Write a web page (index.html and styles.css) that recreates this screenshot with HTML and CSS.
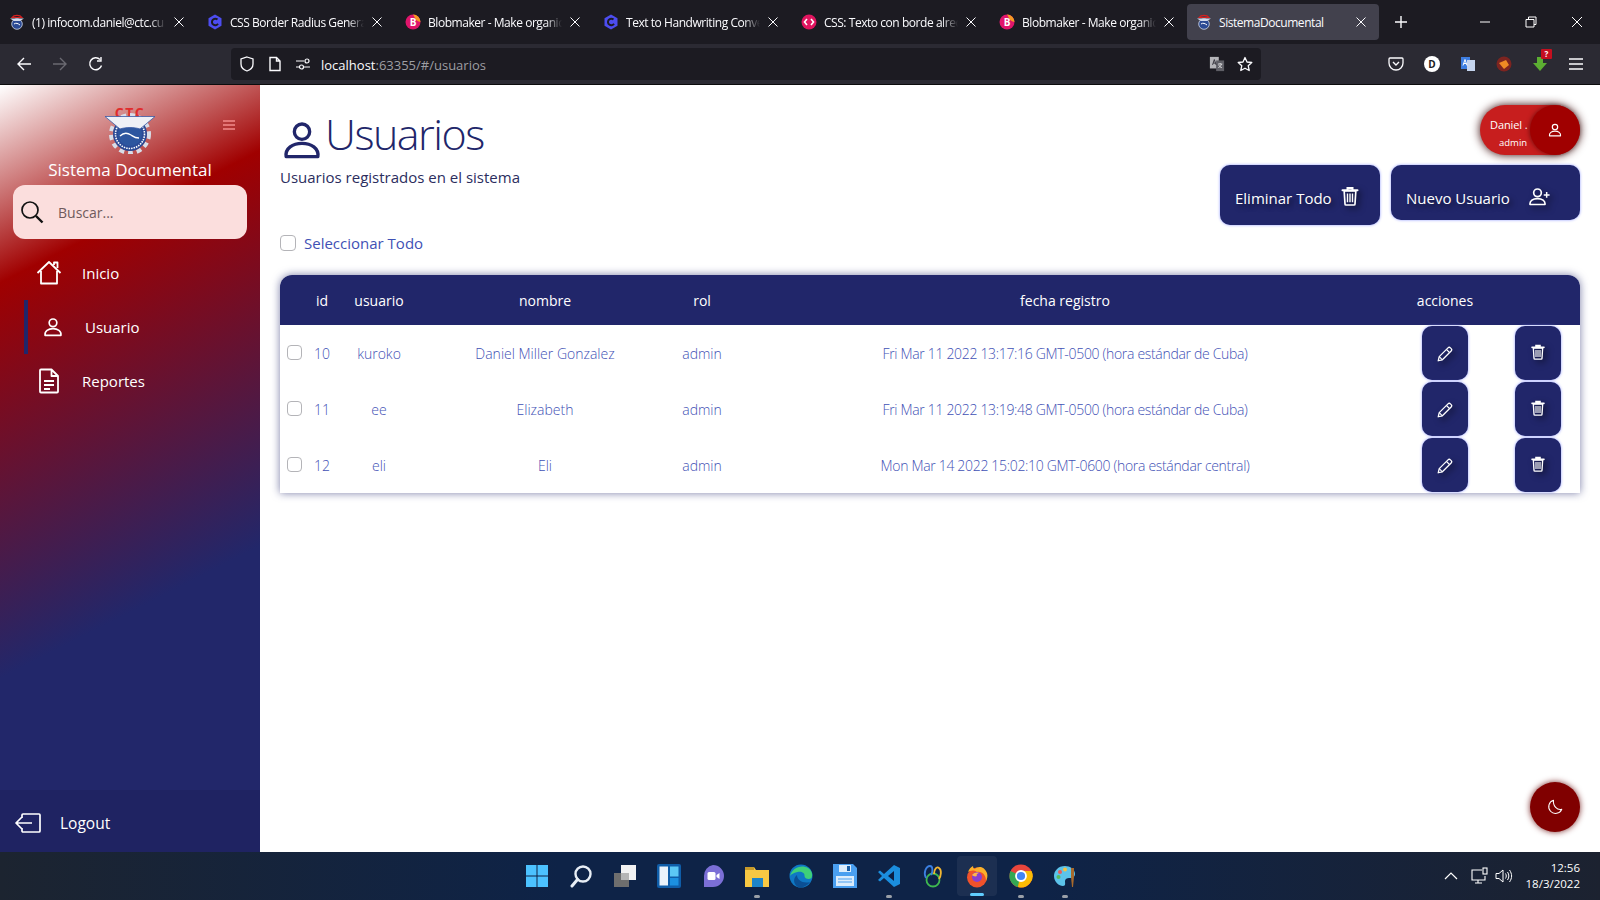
FILE: index.html
```html
<!DOCTYPE html>
<html lang="en">

<head>
    <meta charset="UTF-8" />
    <title>SistemaDocumental</title>
    <link rel="stylesheet" href="styles.css">
</head>

<body>
    <svg class="defs" width="0" height="0">
        <defs>
            <symbol id="i-user" viewBox="0 0 24 24">
                <circle cx="12" cy="7" r="4.6" fill="none" stroke="currentColor" stroke-width="2" />
                <path d="M2.500 22c-.8-5 4-8 9.500-8s10.300 3 9.500 8z" fill="none" stroke="currentColor" stroke-width="2" stroke-linejoin="round" />
            </symbol>
            <symbol id="i-trash" viewBox="0 0 24 24">
                <path d="M3 5h18M9 4V2.500h6V4" fill="none" stroke="currentColor" stroke-width="2.400" stroke-linecap="round" />
                <path d="M5 6l1 15.500c0 .8.500 1.300 1.300 1.300h9.400c.8 0 1.300-.5 1.300-1.300L19 6z" fill="none" stroke="currentColor" stroke-width="2" stroke-linejoin="round" />
                <path d="M9 9v10.500M12 9v10.500M15 9v10.500" fill="none" stroke="currentColor" stroke-width="1.700" />
            </symbol>
            <symbol id="i-pencil" viewBox="0 0 24 24">
                <path d="M3 21l1.300-5.500L16 3.800c.9-.9 2.300-.9 3.200 0l1 1c.9.9.9 2.300 0 3.200L8.500 19.700z" fill="none" stroke="currentColor" stroke-width="1.700" stroke-linejoin="round" />
                <path d="M14 6l4 4M4.300 15.500l4.200 4.200" fill="none" stroke="currentColor" stroke-width="1.500" />
            </symbol>
            <symbol id="i-close" viewBox="0 0 12 12">
                <path d="M1.500 1.500l9 9M10.500 1.500l-9 9" stroke="#fbfbfe" stroke-width="1" />
            </symbol>
            <symbol id="i-hex" viewBox="0 0 16 16">
                <path d="M8 .5l6.500 3.700v7.600L8 15.500l-6.500-3.700V4.200z" fill="#4d4df0" />
                <path d="M10.500 5.500A3.300 3.300 0 1 0 11 9.800" fill="none" stroke="#1c1b22" stroke-width="2" />
            </symbol>
            <symbol id="i-blob" viewBox="0 0 16 16">
                <circle cx="8" cy="8" r="7.500" fill="#e0156b" />
                <path d="M8 .5a7.500 7.500 0 0 1 7.500 7.500A7.500 7.500 0 0 1 10 4z" fill="#f59b23" />
                <text x="8" y="11.500" class="blob-letter">B</text>
            </symbol>
            <symbol id="i-seal" viewBox="0 0 16 16">
                <path d="M3 3.500a5.500 3.500 0 0 1 10 0z" fill="none" stroke="#d32020" stroke-width="1.200" />
                <circle cx="8" cy="10" r="5.300" fill="#2b4a94" stroke="#cfd8ea" stroke-width=".8" />
                <path d="M1 4.500h14L11 7H5z" fill="#cfd8ea" />
                <path d="M5 10c2-1.500 4-.5 6 1" fill="none" stroke="#fff" stroke-width="1" />
            </symbol>
        </defs>
    </svg>

    <header class="tabs">
        <div class="tab"><svg class="favicon"><use href="#i-seal" /></svg><span class="tab-title">(1) infocom.daniel@ctc.cu</span><svg class="tab-close"><use href="#i-close" /></svg></div>
        <div class="tab"><svg class="favicon"><use href="#i-hex" /></svg><span class="tab-title">CSS Border Radius Generat</span><svg class="tab-close"><use href="#i-close" /></svg></div>
        <div class="tab"><svg class="favicon"><use href="#i-blob" /></svg><span class="tab-title">Blobmaker - Make organic</span><svg class="tab-close"><use href="#i-close" /></svg></div>
        <div class="tab"><svg class="favicon"><use href="#i-hex" /></svg><span class="tab-title">Text to Handwriting Conve</span><svg class="tab-close"><use href="#i-close" /></svg></div>
        <div class="tab">
            <svg class="favicon" viewBox="0 0 16 16"><circle cx="8" cy="8" r="7.500" fill="#e0155f" /><path d="M6 5L3.500 8 6 11M10 5l2.500 3L10 11" fill="none" stroke="#fff" stroke-width="1.600" /></svg>
            <span class="tab-title">CSS: Texto con borde alred</span><svg class="tab-close"><use href="#i-close" /></svg>
        </div>
        <div class="tab"><svg class="favicon"><use href="#i-blob" /></svg><span class="tab-title">Blobmaker - Make organic</span><svg class="tab-close"><use href="#i-close" /></svg></div>
        <div class="tab active"><svg class="favicon"><use href="#i-seal" /></svg><span class="tab-title">SistemaDocumental</span><svg class="tab-close"><use href="#i-close" /></svg></div>
        <svg class="new-tab" viewBox="0 0 14 14"><path d="M7 1v12M1 7h12" stroke="#fbfbfe" stroke-width="1.400" /></svg>
        <div class="window-btns">
            <svg viewBox="0 0 12 12"><path d="M1 6h10" stroke="#fff" /></svg>
            <svg viewBox="0 0 12 12"><path d="M3.500 3V1h7.500v7.500H9M1 3.500h8V11H1z" fill="none" stroke="#fff" /></svg>
            <svg viewBox="0 0 12 12"><path d="M1 1l10 10M11 1L1 11" stroke="#fff" /></svg>
        </div>
    </header>

    <div class="toolbar">
        <div class="nav-btns">
            <svg viewBox="0 0 16 16"><path d="M15 8H2M8 2L2 8l6 6" fill="none" stroke="#fbfbfe" stroke-width="1.400" /></svg>
            <svg viewBox="0 0 16 16"><path d="M1 8h13M8 2l6 6-6 6" fill="none" stroke="#6b6a72" stroke-width="1.400" /></svg>
            <svg viewBox="0 0 16 16"><path d="M13.500 9.500A6 6 0 1 1 12 3.500M13 1v4H9" fill="none" stroke="#fbfbfe" stroke-width="1.400" /></svg>
        </div>
        <div class="urlbar">
            <svg viewBox="0 0 16 16"><path d="M8 1l6 2v5c0 3.500-3 6-6 7-3-1-6-3.500-6-7V3z" fill="none" stroke="#fbfbfe" stroke-width="1.300" /></svg>
            <svg viewBox="0 0 16 16"><path d="M3 1.500h6.500L13 5v9.500H3zM9.500 1.500V5H13" fill="none" stroke="#fbfbfe" stroke-width="1.400" /></svg>
            <svg viewBox="0 0 16 16"><path d="M1 5h8M1 11h4M9 11h6" stroke="#fbfbfe" stroke-width="1.200" /><circle cx="12" cy="5" r="2" fill="none" stroke="#fbfbfe" stroke-width="1.200" /><circle cx="6.500" cy="11" r="2" fill="none" stroke="#fbfbfe" stroke-width="1.200" /></svg>
            <span class="url"><b>localhost</b>:63355/#/usuarios</span>
            <svg class="url-translate" viewBox="0 0 18 18"><rect x="1" y="1" width="10" height="13" fill="#b5b5b9" /><rect x="8" y="5" width="9" height="12" fill="#5f5f66" /><path d="M4 10l2-6 2 6M4.800 8h2.400" fill="none" stroke="#2b2a33" stroke-width="1" /><path d="M10 9h5M12.500 8v1M14 9c-.5 2-2 3.500-3.500 4M11 10c.5 1.500 2 3 3.500 3" fill="none" stroke="#fff" stroke-width=".8" /></svg>
            <svg viewBox="0 0 16 16"><path d="M8 1.500l2 4.500 4.800.5-3.600 3.200 1 4.800L8 12.200l-4.200 2.300 1-4.800L1.200 6.500 6 6z" fill="none" stroke="#fbfbfe" stroke-width="1.300" stroke-linejoin="round" /></svg>
        </div>
        <div class="addons">
            <svg viewBox="0 0 16 16"><path d="M2 2h12c.7 0 1 .4 1 1v4a7 7 0 0 1-14 0V3c0-.6.300-1 1-1z" fill="none" stroke="#fbfbfe" stroke-width="1.300" /><path d="M5 6l3 3 3-3" fill="none" stroke="#fbfbfe" stroke-width="1.400" /></svg>
            <svg viewBox="0 0 16 16"><circle cx="8" cy="8" r="8" fill="#fff" /><text x="8" y="11.500" class="addon-letter">D</text></svg>
            <svg viewBox="0 0 16 16"><rect x="1" y="1" width="9" height="12" fill="#3d7de0" /><rect x="7" y="4" width="8" height="11" fill="#c5d4ee" /><path d="M3 9.500l2-6 2 6M3.800 7.500h2.400" fill="none" stroke="#fff" stroke-width="1" /></svg>
            <svg viewBox="0 0 16 16"><circle cx="8" cy="8" r="7.500" fill="#7d2420" /><path d="M3 7l7-3 3 5-5 4z" fill="#f08a24" /></svg>
            <div class="addon-badged">
                <svg viewBox="0 0 16 16"><path d="M5 1h6v6h4l-7 8-7-8h4z" fill="#5cae32" /></svg>
                <span class="addon-count">?</span>
            </div>
            <svg viewBox="0 0 16 16"><path d="M1 3h14M1 8h14M1 13h14" stroke="#fbfbfe" stroke-width="1.400" /></svg>
        </div>
    </div>

    <div class="app">
        <aside class="sidebar">
            <div class="brand">
                <button class="menu-toggle" aria-label="menu">
                    <svg viewBox="0 0 12 12"><path d="M0 2h12M0 6h12M0 10h12" stroke="#f28b8b" stroke-width="1.700" /></svg>
                </button>
                <svg class="logo" viewBox="0 0 50 50">
                    <text x="25" y="14" class="logo-text">CTC</text>
                    <circle cx="25" cy="30" r="19" fill="none" stroke="#d8dde8" stroke-width="4" stroke-dasharray="5 3.900" />
                    <circle cx="25" cy="30" r="17" fill="#2a4a96" />
                    <circle cx="25" cy="30" r="14.500" fill="none" stroke="#fff" stroke-width="1.600" stroke-dasharray="1.500 1" />
                    <circle cx="25" cy="30" r="12" fill="#2d569f" />
                    <path d="M15 32c4-4 8-3 11-1s4 3 8 3" fill="none" stroke="#fff" stroke-width="1.300" />
                    <path d="M0 12.500h50L35 25c-6-2-14-2-20 0z" fill="#eef0f6" stroke="#3a5aa6" stroke-width=".8" />
                </svg>
                <h2>Sistema Documental</h2>
            </div>
            <div class="search">
                <svg viewBox="0 0 24 24"><circle cx="10" cy="10" r="8" fill="none" stroke="#111" stroke-width="1.700" /><path d="M16 16l6.500 6.500" stroke="#111" stroke-width="2.400" /></svg>
                <span>Buscar...</span>
            </div>
            <nav class="side-nav">
                <a href="#">
                    <svg viewBox="0 0 26 26"><path d="M1.500 13L13 2l11.500 11M5 11v12.500h16V11M18 5V2.500h3.500V8" fill="none" stroke="currentColor" stroke-width="1.800" stroke-linejoin="round" /></svg>
                    Inicio
                </a>
                <a href="#" class="active">
                    <svg viewBox="0 0 24 24"><use href="#i-user" /></svg>
                    Usuario
                </a>
                <a href="#">
                    <svg viewBox="0 0 26 26"><path d="M5 1.500h10.500l6.500 6.500v15.500c0 .6-.4 1-1 1H5c-.6 0-1-.4-1-1v-21c0-.6.400-1 1-1zM15.500 1.500V8H22" fill="none" stroke="currentColor" stroke-width="1.800" stroke-linejoin="round" /><path d="M8 13h10M8 17h10M8 21h6" stroke="currentColor" stroke-width="1.800" /></svg>
                    Reportes
                </a>
            </nav>
            <a href="#" class="logout">
                <svg viewBox="0 0 26 20"><path d="M7 5V2c0-.6.400-1 1-1h16c.6 0 1 .4 1 1v16c0 .6-.4 1-1 1H8c-.6 0-1-.4-1-1v-3M17 10H2M7 4l-6 6 6 6" fill="none" stroke="currentColor" stroke-width="1.700" stroke-linejoin="round" /></svg>
                Logout
            </a>
        </aside>

        <main class="content">
            <div class="page-head">
                <div class="page-title">
                    <h1><svg viewBox="0 0 24 24"><use href="#i-user" /></svg><span class="page-name">Usuarios</span></h1>
                    <p>Usuarios registrados en el sistema</p>
                </div>
                <div class="page-tools">
                    <div class="user-badge">
                        <div class="user-info">
                            <span class="user-name">Daniel .</span>
                            <span class="user-role">admin</span>
                        </div>
                        <div class="user-avatar"><svg viewBox="0 0 24 24"><use href="#i-user" /></svg></div>
                    </div>
                    <div class="page-actions">
                        <button class="btn btn-tall">Eliminar Todo <svg viewBox="0 0 24 24"><use href="#i-trash" /></svg></button>
                        <button class="btn btn-wide">Nuevo Usuario
                            <svg viewBox="0 0 26 24"><circle cx="10" cy="7" r="4.600" fill="none" stroke="currentColor" stroke-width="2" /><path d="M1 21c-.5-4.500 3.500-7 9-7s9.500 2.500 9 7z" fill="none" stroke="currentColor" stroke-width="2" stroke-linejoin="round" /><path d="M21 6v7M17.500 9.500h7" stroke="currentColor" stroke-width="1.800" /></svg>
                        </button>
                    </div>
                </div>
            </div>

            <label class="select-all"><span class="check"></span>Seleccionar Todo</label>

            <table class="users">
                <colgroup>
                    <col class="c-check"><col class="c-id"><col class="c-user"><col class="c-name"><col class="c-rol"><col class="c-date"><col class="c-edit"><col class="c-del">
                </colgroup>
                <thead>
                    <tr><th></th><th>id</th><th>usuario</th><th>nombre</th><th>rol</th><th>fecha registro</th><th>acciones</th><th></th></tr>
                </thead>
                <tbody>
                    <tr>
                        <td><span class="check"></span></td><td>10</td><td>kuroko</td><td>Daniel Miller Gonzalez</td><td>admin</td>
                        <td class="date">Fri Mar 11 2022 13:17:16 GMT-0500 (hora estándar de Cuba)</td>
                        <td><button class="btn-icon"><svg viewBox="0 0 24 24"><use href="#i-pencil" /></svg></button></td>
                        <td class="del"><button class="btn-icon"><svg viewBox="0 0 24 24"><use href="#i-trash" /></svg></button></td>
                    </tr>
                    <tr>
                        <td><span class="check"></span></td><td>11</td><td>ee</td><td>Elizabeth</td><td>admin</td>
                        <td class="date">Fri Mar 11 2022 13:19:48 GMT-0500 (hora estándar de Cuba)</td>
                        <td><button class="btn-icon"><svg viewBox="0 0 24 24"><use href="#i-pencil" /></svg></button></td>
                        <td class="del"><button class="btn-icon"><svg viewBox="0 0 24 24"><use href="#i-trash" /></svg></button></td>
                    </tr>
                    <tr>
                        <td><span class="check"></span></td><td>12</td><td>eli</td><td>Eli</td><td>admin</td>
                        <td class="date">Mon Mar 14 2022 15:02:10 GMT-0600 (hora estándar central)</td>
                        <td><button class="btn-icon"><svg viewBox="0 0 24 24"><use href="#i-pencil" /></svg></button></td>
                        <td class="del"><button class="btn-icon"><svg viewBox="0 0 24 24"><use href="#i-trash" /></svg></button></td>
                    </tr>
                </tbody>
            </table>

            <button class="fab" aria-label="tema">
                <svg viewBox="0 0 24 24"><path d="M10 3a9 9 0 1 0 11 12c-6 1.500-12-4-11-12z" fill="none" stroke="#fff" stroke-width="1.400" stroke-linejoin="round" /></svg>
            </button>
        </main>
    </div>

    <footer class="taskbar">
        <div class="task-icons">
            <div class="task"><svg viewBox="0 0 24 24"><path d="M1 1h10.500v10.500H1zM12.500 1H23v10.500H12.500zM1 12.500h10.500V23H1zM12.500 12.500H23V23H12.500z" fill="#4cc2ff" /></svg></div>
            <div class="task"><svg viewBox="0 0 24 24"><circle cx="14" cy="10" r="7.500" fill="none" stroke="#e8eef5" stroke-width="2.400" /><path d="M8.500 15.500L3 22" stroke="#e8eef5" stroke-width="3" stroke-linecap="round" /></svg></div>
            <div class="task"><svg viewBox="0 0 24 24"><rect x="1" y="9" width="15" height="14" fill="#6e6e6e" /><rect x="8" y="1" width="15" height="15" fill="#f2f2f2" /><rect x="8" y="9" width="8" height="7" fill="#b5b5b5" /></svg></div>
            <div class="task"><svg viewBox="0 0 24 24"><rect x="0" y="0" width="24" height="24" rx="2" fill="#0f5da8" /><rect x="2.500" y="2.500" width="8.500" height="19" fill="#eaf2fb" /><rect x="13" y="2.500" width="8.500" height="10" fill="#5cc8f5" /><rect x="13" y="14" width="8.500" height="7.500" fill="#1c90e0" /></svg></div>
            <div class="task"><svg viewBox="0 0 24 24"><path d="M12 1a11 11 0 0 1 0 22H3V12A11 11 0 0 1 12 1z" fill="#7b6fd6" /><rect x="6.500" y="8" width="8" height="8" rx="1.500" fill="#fff" /><path d="M15.500 11l3-2v6l-3-2z" fill="#fff" /></svg></div>
            <div class="task has-dot"><svg viewBox="0 0 24 24"><path d="M0 3h9l2 3h13v17H0z" fill="#f7c843" /><rect x="0" y="3" width="9" height="3" fill="#c79a2a" /><rect x="7" y="14" width="11" height="9" fill="#1d84c8" /></svg></div>
            <div class="task"><svg viewBox="0 0 24 24"><circle cx="12" cy="12" r="11.500" fill="#0f78c4" /><path d="M1 12C3 4 12 0 19 4c4 2.500 5 7 3.500 10-2 2-7 1-7-2 .5-3-3-5-7-4-4 1-6.500 2-7.500 4z" fill="#3ed07a" /><path d="M9 23c-5-3-5-9-1-12 0 5 6 9 13 7-3 4-7 6-12 5z" fill="#0b4f94" /></svg></div>
            <div class="task"><svg viewBox="0 0 24 24"><path d="M0 0h20l4 4v20H0z" fill="#4a9ff0" /><rect x="6" y="1" width="12" height="7" fill="#dcecfb" /><rect x="14" y="2" width="3" height="5" fill="#1a5ea6" /><rect x="3" y="12" width="18" height="10" fill="#dcecfb" /><path d="M5 15h14M5 18h14" stroke="#4a9ff0" /></svg></div>
            <div class="task has-dot"><svg viewBox="0 0 24 24"><path d="M17 1l6 3v16l-6 3L7 14l-4 3.500L1 16l4-4-4-4 2-1.500L7 10z" fill="#1b8ede" /><path d="M17 7l-6 5 6 5z" fill="#0b1f44" /></svg></div>
            <div class="task"><svg viewBox="0 0 24 24"><circle cx="12" cy="16" r="6.500" fill="none" stroke="#3fb950" stroke-width="1.800" /><path d="M5 14C2 9 5 2 9 2c3 0 3 6 1 9" fill="none" stroke="#3b7fe0" stroke-width="1.800" /><path d="M13 10c0-5 3-8 5-6 3 2 2 8 0 11" fill="none" stroke="#f2b632" stroke-width="1.800" /></svg></div>
            <div class="task is-open"><svg viewBox="0 0 24 24"><circle cx="12" cy="13.500" r="10" fill="#f0522b" /><path d="M3 8c1-3 3-5 5-6 0 2 1 3 2 3 3-3 9-3 12 4 1 3 0 6-1 8 0-6-4-10-9-9C8 5 5 7 3 8z" fill="#fbb02a" /><circle cx="12" cy="13" r="5" fill="#8a3fd0" /><path d="M7 11c2-3 6-3 8-2-3 0-4 2-3 3-2 1-4 0-5-1z" fill="#ffb74a" /></svg></div>
            <div class="task has-dot"><svg viewBox="0 0 24 24"><circle cx="12" cy="12" r="11.500" fill="#e8453c" /><path d="M12 12L1.500 7A11.500 11.500 0 0 0 9 23z" fill="#34a853" /><path d="M12 7h10.500A11.500 11.500 0 0 1 9 23z" fill="#fbbc05" /><circle cx="12" cy="12" r="5" fill="#4285f4" stroke="#fff" stroke-width="1.800" /></svg></div>
            <div class="task has-dot"><svg viewBox="0 0 24 24"><path d="M12 2C5 2 1 7 1 12c0 6 5 10 9 10 3 0 2-3 2-5s2-3 4-3 6 0 6-4c0-5-5-8-10-8z" fill="#5cc3ea" /><circle cx="7" cy="8" r="2" fill="#e85c5c" /><circle cx="12" cy="5.500" r="2" fill="#f5c242" /><circle cx="5.500" cy="13" r="2" fill="#58b85c" /><path d="M18 4h3v9l-1 10h-1l-1-10z" fill="#a86a2c" /></svg></div>
        </div>
        <div class="tray">
            <svg class="tray-up" viewBox="0 0 14 14"><path d="M1 10l6-6 6 6" fill="none" stroke="#fff" stroke-width="1.200" /></svg>
            <svg class="tray-net" viewBox="0 0 18 18"><path d="M11 3H1v10h13V9M7 13v3M4 16h7" fill="none" stroke="#fff" stroke-width="1.100" /><rect x="12" y="1" width="4" height="6" fill="none" stroke="#fff" stroke-width="1.100" /></svg>
            <svg class="tray-vol" viewBox="0 0 18 18"><path d="M1 6.500h3L8 3v12l-4-3.500H1zM10.500 6.500c1 1.500 1 3.500 0 5M12.500 5c1.800 2.500 1.800 5.500 0 8M14.500 3c2.800 4 2.800 8 0 12" fill="none" stroke="#fff" stroke-width="1" /></svg>
            <div class="clock"><span>12:56</span><span>18/3/2022</span></div>
        </div>
    </footer>
</body>

</html>
```

FILE: styles.css
```css
:root{
    --navy: #21266a;
    --blue: #3f51b5;
    --red: #a00000;
    --ui-font: "Open Sans", "Noto Sans", sans-serif;
}

*{
    box-sizing: border-box;
}
body{
    margin: 0;
    width: 1600px;
    height: 900px;
    overflow: hidden;
    display: flex;
    flex-direction: column;
    font-family: var(--ui-font);
    color: var(--navy);
}
.defs{
    position: absolute;
}
button{
    font-family: inherit;
    border: 0;
}

/* browser chrome */
.tabs{
    height: 44px;
    background-color: #1c1b22;
    display: flex;
    align-items: center;
    padding-left: 9px;
    color: #fbfbfe;
    font-size: 12px;
    letter-spacing: -.45px;
}
.tab{
    width: 198px;
    height: 36px;
    flex: none;
    display: flex;
    align-items: center;
    gap: 7px;
    padding: 0 22px 0 0;
    border-radius: 4px;
}
.favicon{
    width: 16px;
    height: 16px;
    flex: none;
}
.blob-letter{
    font: bold 10px var(--ui-font);
    fill: #fff;
    text-anchor: middle;
}
.tab-title{
    flex: 1;
    min-width: 0;
    white-space: nowrap;
    -webkit-mask-image: linear-gradient(90deg, #000 88%, transparent);
    mask-image: linear-gradient(90deg, #000 88%, transparent);
}
.tab-close{
    flex: none;
    width: 12px;
    height: 12px;
}
.tab.active{
    width: 192px;
    margin-left: -10px;
    padding: 0 12px 0 9px;
    background-color: #42414d;
}
.tab.active .tab-title{
    -webkit-mask-image: none;
    mask-image: none;
}
.new-tab{
    width: 14px;
    height: 14px;
    margin-left: 15px;
}
.window-btns{
    margin-left: auto;
    display: flex;
}
.window-btns svg{
    width: 12px;
    height: 12px;
    margin: 0 17px;
}
.toolbar{
    height: 41px;
    background-color: #2b2a33;
    display: flex;
    align-items: center;
    border-bottom: 1px solid #0c0c0d;
}
.nav-btns{
    width: 231px;
    display: flex;
    gap: 20px;
    padding-left: 16px;
}
.nav-btns svg{
    width: 16px;
    height: 16px;
}
.urlbar{
    width: 1030px;
    height: 32px;
    background-color: #1c1b22;
    border-radius: 4px;
    display: flex;
    align-items: center;
    gap: 12px;
    padding: 0 8px;
    font-size: 13px;
    color: #9e9ea3;
}
.urlbar svg{
    width: 16px;
    height: 16px;
    flex: none;
}
.url{
    flex: 1;
    margin-left: -2px;
    padding-top: 1px;
}
.url b{
    font-weight: 400;
    color: #fbfbfe;
}
.addon-letter{
    font: bold 10px var(--ui-font);
    fill: #1c1b22;
    text-anchor: middle;
}
.addons{
    display: flex;
    align-items: center;
    gap: 20px;
    margin-left: auto;
    padding-right: 16px;
}
.addons svg{
    width: 16px;
    height: 16px;
    display: block;
}
.addon-badged{
    position: relative;
}
.addon-count{
    position: absolute;
    top: -7px;
    right: -4px;
    width: 11px;
    height: 10px;
    background-color: #c50f1f;
    color: #fff;
    font-size: 8px;
    font-weight: bold;
    line-height: 10px;
    text-align: center;
    border-radius: 1px;
}

/* app */
.app{
    flex: 1;
    display: flex;
    min-height: 0;
}
.sidebar{
    width: 260px;
    flex: none;
    display: flex;
    flex-direction: column;
    color: #fff;
    background: linear-gradient(153deg, #fff 0%, #a00000 22%, #22276a 66%);
}
.brand{
    position: relative;
    text-align: center;
    padding-top: 19px;
}
.logo{
    display: block;
    width: 50px;
    height: 50px;
    margin: 0 auto;
}
.logo-text{
    font: bold 14px var(--ui-font);
    fill: #e02c2c;
    text-anchor: middle;
    letter-spacing: 1.500px;
}
.brand h2{
    margin: 3px 0 0;
    font-size: 17px;
    font-weight: 400;
    line-height: 26px;
}
.menu-toggle{
    position: absolute;
    top: 34px;
    right: 25px;
    width: 12px;
    height: 12px;
    padding: 0;
    background: none;
}
.menu-toggle svg{
    display: block;
}
.search{
    margin: 2px 13px 0;
    height: 54px;
    background-color: #fbdedd;
    border-radius: 12px;
    display: flex;
    align-items: center;
    gap: 14px;
    padding-left: 7px;
    color: #6f5a5c;
    font-size: 14px;
}
.search svg{
    width: 24px;
    height: 24px;
}
.side-nav{
    display: flex;
    flex-direction: column;
    padding-top: 7px;
}
.side-nav a{
    height: 54px;
    display: flex;
    align-items: center;
    gap: 20px;
    padding-left: 36px;
    color: #fff;
    text-decoration: none;
    font-size: 15px;
}
.side-nav svg{
    width: 26px;
    height: 26px;
}
.side-nav .active{
    margin-left: 24px;
    padding-left: 15px;
    gap: 22px;
    border-left: 4px solid var(--navy);
}
.side-nav .active svg{
    width: 20px;
    height: 20px;
}
.logout{
    margin-top: auto;
    height: 62px;
    background-color: #1f2362;
    display: flex;
    align-items: center;
    gap: 19px;
    padding: 3px 0 0 15px;
    color: #fff;
    text-decoration: none;
    font-size: 15.500px;
}
.logout svg{
    width: 26px;
    height: 20px;
}

.content{
    position: relative;
    flex: 1;
    background-color: #fff;
    padding: 20px 20px 0;
}
.page-head{
    display: flex;
    justify-content: space-between;
    height: 120px;
}
.page-title h1{
    margin: 0;
    height: 60px;
    display: flex;
    align-items: center;
    gap: 3px;
    font-size: 43px;
    font-weight: 300;
    line-height: 60px;
    letter-spacing: -1.500px;
}
.page-name{
    margin-top: -2px;
}
.page-title h1 svg{
    width: 40px;
    height: 40px;
    margin-top: 10px;
    margin-left: 2px;
}
.page-title p{
    margin: 0;
    font-size: 15px;
    line-height: 24px;
    color: #2b2d5e;
}
.page-tools{
    display: flex;
    flex-direction: column;
    align-items: flex-end;
    gap: 10px;
}
.user-badge{
    width: 100px;
    height: 50px;
    display: flex;
    background-color: #c71e1e;
    border-radius: 25px;
    color: #fff;
    box-shadow: 0 0 10px #3a0b0b;
}
.user-info{
    flex: 1;
    min-width: 0;
    display: flex;
    flex-direction: column;
    padding-left: 10px;
}
.user-name{
    font-size: 11px;
    line-height: 16px;
    margin-top: 12px;
    white-space: nowrap;
    letter-spacing: -.1px;
}
.user-role{
    font-size: 9.500px;
    line-height: 14px;
    margin: 3px 0 0 9px;
}
.user-avatar{
    width: 50px;
    height: 50px;
    flex: none;
    background-color: var(--red);
    border-radius: 50%;
    display: flex;
    align-items: center;
    justify-content: center;
    box-shadow: -1px 0 4px rgba(60, 0, 0, .5);
}
.user-avatar svg{
    width: 14px;
    height: 14px;
}
.page-actions{
    display: flex;
    align-items: flex-start;
    gap: 11px;
}
.btn{
    display: flex;
    align-items: center;
    background-color: var(--navy);
    color: #fff;
    font-size: 15px;
    border-radius: 10px;
    box-shadow: 0 0 3px #8f99ff;
    padding: 6px 15px 0;
    text-shadow: 3px 3px 5px rgba(0, 0, 0, .5);
}
.btn svg{
    filter: drop-shadow(3px 3px 3px rgba(0, 0, 0, .6));
}
.btn-tall{
    width: 160px;
    height: 60px;
    gap: 8px;
}
.btn-tall svg{
    width: 20px;
    height: 20px;
    margin-top: -4px;
}
.btn-wide{
    width: 189px;
    height: 55px;
    gap: 19px;
    padding-top: 11px;
}
.btn-wide svg{
    width: 22px;
    height: 20px;
    margin-top: -3px;
}
.select-all{
    display: flex;
    align-items: center;
    gap: 8px;
    height: 16px;
    margin-top: 10px;
    color: var(--blue);
    font-size: 15px;
}
.check{
    display: block;
    width: 16px;
    height: 16px;
    border: 1px solid #b4b4b8;
    border-radius: 4px;
    background-color: #fff;
}
.users{
    margin-top: 24px;
    width: 1300px;
    table-layout: fixed;
    border-collapse: separate;
    border-spacing: 0;
    border-radius: 12px 12px 0 0;
    box-shadow: 0 0 8px rgba(33, 38, 106, .6);
}
.c-check{ width: 26px; }
.c-id{ width: 32px; }
.c-user{ width: 82px; }
.c-name{ width: 250px; }
.c-rol{ width: 64px; }
.c-date{ width: 662px; }
.c-edit{ width: 98px; }
.c-del{ width: 86px; }
.users th{
    height: 50px;
    padding: 0;
    background-color: var(--navy);
    color: #fff;
    font-size: 14px;
    font-weight: 400;
}
.users th:first-child{
    border-top-left-radius: 12px;
}
.users th:last-child{
    border-top-right-radius: 12px;
}
.users td{
    height: 56px;
    padding: 0;
    text-align: center;
    color: var(--blue);
    font-size: 14px;
    font-weight: 300;
}
.users .date{
    letter-spacing: -.32px;
}
.users .del{
    padding-left: 2px;
}
.users td .check{
    margin: 0 0 2px 7px;
    width: 15px;
    height: 15px;
}
.btn-icon{
    width: 46px;
    height: 54px;
    padding: 0;
    vertical-align: middle;
    background-color: var(--navy);
    color: #fff;
    border-radius: 10px;
    box-shadow: 0 0 3px #8f99ff;
}
.btn-icon svg{
    width: 18px;
    height: 18px;
    vertical-align: middle;
    filter: drop-shadow(3px 3px 3px rgba(0, 0, 0, .6));
}
.del .btn-icon svg{
    width: 16px;
    height: 16px;
    margin-bottom: 3px;
}
.fab{
    position: absolute;
    right: 20px;
    bottom: 20px;
    width: 50px;
    height: 50px;
    padding: 0;
    border-radius: 50%;
    background-color: #800000;
    box-shadow: 0 0 6px #7a2a2a;
}
.fab svg{
    display: block;
    width: 18px;
    height: 18px;
    margin: auto;
}

/* windows taskbar */
.taskbar{
    position: relative;
    height: 48px;
    display: flex;
    justify-content: flex-end;
    background: linear-gradient(90deg, #1c2430 0%, #0e2347 35%, #0e2347 65%, #1c2230 100%);
    color: #fff;
}
.task-icons{
    position: absolute;
    left: 515px;
    top: 0;
    height: 48px;
    display: flex;
}
.task{
    position: relative;
    width: 44px;
    height: 48px;
    display: flex;
    align-items: center;
    justify-content: center;
}
.task svg{
    width: 24px;
    height: 24px;
}
.has-dot::after{
    content: "";
    position: absolute;
    left: 19px;
    bottom: 2px;
    width: 6px;
    height: 3px;
    border-radius: 2px;
    background-color: #9aa0a8;
}
.is-open::before{
    content: "";
    position: absolute;
    left: 2px;
    top: 4px;
    width: 40px;
    height: 40px;
    background-color: rgba(255, 255, 255, .06);
    border-radius: 4px;
}
.is-open svg{
    position: relative;
}
.is-open::after{
    content: "";
    position: absolute;
    left: 15px;
    bottom: 4px;
    width: 14px;
    height: 3px;
    border-radius: 2px;
    background-color: #60cdff;
}
.tray{
    display: flex;
    align-items: center;
    padding-right: 20px;
}
.tray-up{
    width: 14px;
    height: 14px;
}
.tray-net{
    width: 18px;
    height: 18px;
    margin-left: 13px;
}
.tray-vol{
    width: 18px;
    height: 18px;
    margin-left: 6px;
}
.clock{
    display: flex;
    flex-direction: column;
    align-items: flex-end;
    margin-left: 13px;
    font-size: 11.500px;
    line-height: 16px;
}
```
